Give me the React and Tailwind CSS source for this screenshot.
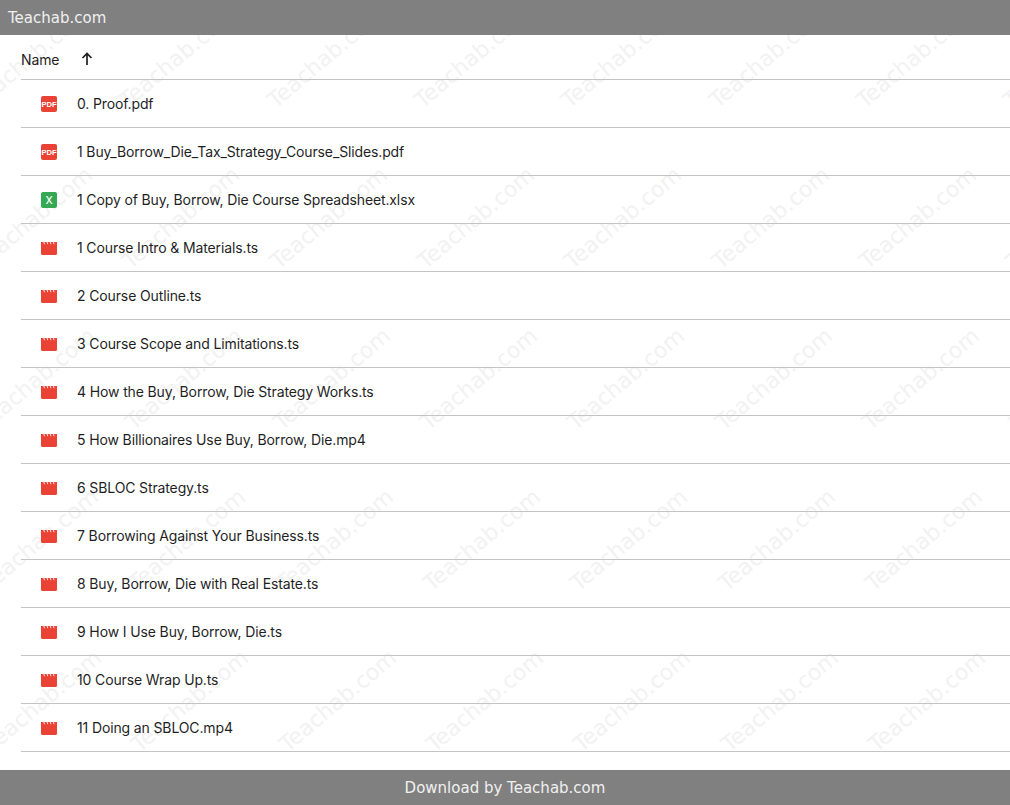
const files = [
  ["pdf", "0. Proof.pdf"],
  ["pdf", "1 Buy_Borrow_Die_Tax_Strategy_Course_Slides.pdf"],
  ["xlsx", "1 Copy of Buy, Borrow, Die Course Spreadsheet.xlsx"],
  ["video", "1 Course Intro & Materials.ts"],
  ["video", "2 Course Outline.ts"],
  ["video", "3 Course Scope and Limitations.ts"],
  ["video", "4 How the Buy, Borrow, Die Strategy Works.ts"],
  ["video", "5 How Billionaires Use Buy, Borrow, Die.mp4"],
  ["video", "6 SBLOC Strategy.ts"],
  ["video", "7 Borrowing Against Your Business.ts"],
  ["video", "8 Buy, Borrow, Die with Real Estate.ts"],
  ["video", "9 How I Use Buy, Borrow, Die.ts"],
  ["video", "10 Course Wrap Up.ts"],
  ["video", "11 Doing an SBLOC.mp4"],
];

function FileIcon({ type }) {
  if (type === "pdf") {
    return (
      <svg width="16" height="16" viewBox="0 0 16 16">
        <rect width="16" height="16" rx="2" fill="#ea4335" />
        <text x="8" y="10.8" textAnchor="middle" fontSize="7.6" fontWeight="700" fill="#fff" fontFamily="Liberation Sans, sans-serif">PDF</text>
      </svg>
    );
  }
  if (type === "xlsx") {
    return (
      <svg width="16" height="16" viewBox="0 0 16 16">
        <rect width="16" height="16" rx="2" fill="#34a853" />
        <text x="8" y="12.2" textAnchor="middle" fontSize="11.5" fill="#fff" fontFamily="Roboto, sans-serif">X</text>
      </svg>
    );
  }
  return (
    <svg width="16" height="16" viewBox="0 0 16 16">
      <path d="M0 2h16v11.5a1.5 1.5 0 0 1-1.5 1.5H1.5A1.5 1.5 0 0 1 0 13.5z" fill="#ea4335" />
      <path d="M2.8 2l.8 2.2M6 2l.8 2.2M9.2 2l.8 2.2M12.4 2l.8 2.2" stroke="#fff" strokeWidth="0.9" />
    </svg>
  );
}

const marks = [];
for (let r = 0; r < 5; r++) {
  for (let c = 0; c < 8; c++) {
    marks.push({ x: -17 + c * 147.3 + r * 3, y: 112 + r * 161 });
  }
}

function Watermark() {
  return (
    <div className="pointer-events-none absolute inset-0 overflow-hidden">
      {marks.map((m, i) => (
        <span
          key={i}
          className="absolute origin-bottom-left -rotate-[40deg] whitespace-nowrap text-[22px] leading-none text-[#f2f2f2] font-['DejaVu_Sans',sans-serif]"
          style={{ left: m.x, top: m.y - 22 }}
        >
          Teachab.com
        </span>
      ))}
    </div>
  );
}

export default function App() {
  return (
    <div className="relative flex h-screen flex-col overflow-hidden bg-white font-['Inter',sans-serif]">
      <Watermark />
      <header className="relative flex h-[35px] shrink-0 items-center bg-[#808080] pl-2 pt-px text-[15px] text-[#f0f0f0] font-['DejaVu_Sans',sans-serif]">
        Teachab.com
      </header>
      <main className="relative flex-1 pl-[21px]">
        <div className="flex h-[45px] items-center border-b border-[#c4c4c4] pt-[5px] text-sm tracking-[-0.13px] text-[#1f1f1f]">
          <span>Name</span>
          <svg className="ml-[20px] -mt-[2px]" width="16" height="16" viewBox="0 0 16 16" fill="none" stroke="#1f1f1f" strokeWidth="1.7">
            <path d="M8 14V3M3.5 7 8 2.5 12.5 7" />
          </svg>
        </div>
        {files.map(([type, name]) => (
          <div key={name} className="flex h-12 items-center border-b border-[#c4c4c4] pl-5 text-sm tracking-[-0.13px] text-[#1f1f1f]">
            <FileIcon type={type} />
            <span className="ml-5">{name}</span>
          </div>
        ))}
      </main>
      <footer className="relative flex h-[35px] shrink-0 items-center justify-center bg-[#808080] pt-px text-[15px] text-[#f0f0f0] font-['DejaVu_Sans',sans-serif]">
        Download by Teachab.com
      </footer>
    </div>
  );
}
